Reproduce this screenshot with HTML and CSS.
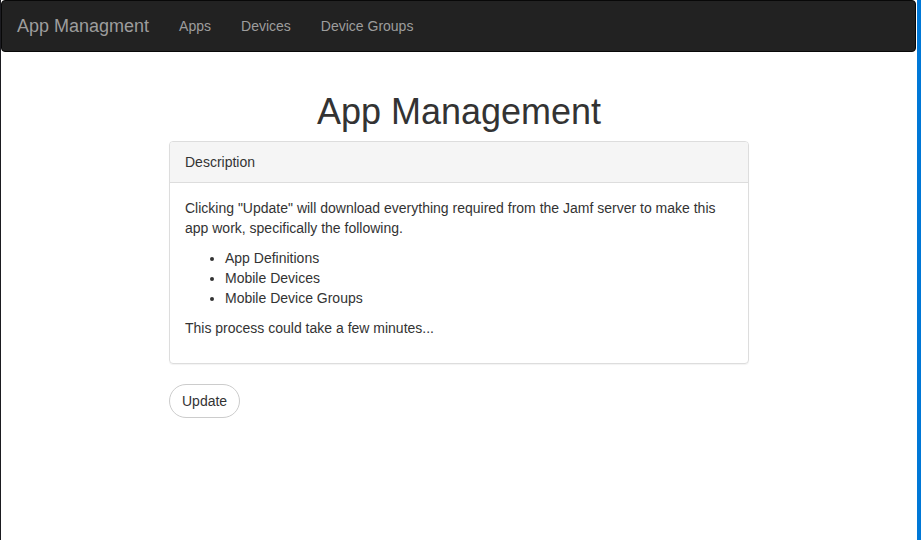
FILE: index.html
```html
<!DOCTYPE html>
<html>
<head>
<meta charset="utf-8">
<link rel="stylesheet" href="styles.css">
</head>
<body>
<nav class="navbar">
  <a class="brand" href="#">App Managment</a>
  <ul class="nav">
    <li><a href="#">Apps</a></li>
    <li><a href="#">Devices</a></li>
    <li><a href="#">Device Groups</a></li>
  </ul>
</nav>
<main class="container">
  <h1 class="title">App Management</h1>
  <section class="panel">
    <div class="panel-heading">Description</div>
    <div class="panel-body">
      <p>Clicking "Update" will download everything required from the Jamf server to make this<br>app work, specifically the following.</p>
      <ul class="list">
        <li>App Definitions</li>
        <li>Mobile Devices</li>
        <li>Mobile Device Groups</li>
      </ul>
      <p>This process could take a few minutes...</p>
    </div>
  </section>
  <button class="btn" type="button">Update</button>
</main>
</body>
</html>
```

FILE: styles.css
```css
html, body {
  height: 100%;
}
body {
  margin: 0;
  box-sizing: border-box;
  border-left: 1px solid #1b1b20;
  border-right: 4px solid #0078d7;
  font-family: "Liberation Sans", Arial, sans-serif;
  font-size: 14px;
  line-height: 20px;
  color: #333;
  background: #fff;
}
.navbar {
  display: flex;
  align-items: center;
  height: 50px;
  margin: 0 1px 20px 0;
  padding: 0 15px 0 0;
  background: #222;
  border: 1px solid #080808;
  border-radius: 4px;
}
.brand {
  padding: 15px;
  font-size: 18px;
  line-height: 20px;
  color: #9d9d9d;
  text-decoration: none;
}
.nav {
  display: flex;
  list-style: none;
  margin: 0;
  padding: 0;
}
.nav a {
  display: block;
  padding: 15px;
  color: #9d9d9d;
  text-decoration: none;
}
.container {
  display: flow-root;
  width: 580px;
  margin: 0 auto;
}
.title {
  margin: 20px 0 10px;
  font-size: 36px;
  font-weight: 500;
  line-height: 39px;
  text-align: center;
}
.panel {
  margin-bottom: 20px;
  border: 1px solid #ddd;
  border-radius: 4px;
  box-shadow: 0 1px 1px rgba(0,0,0,0.05);
}
.panel-heading {
  padding: 10px 15px;
  background: #f5f5f5;
  border-bottom: 1px solid #ddd;
  border-radius: 3px 3px 0 0;
}
.panel-body {
  padding: 15px;
}
.panel-body p {
  margin: 0 0 10px;
}
.list {
  margin: 0 0 10px;
  padding-left: 40px;
}
.btn {
  font-family: inherit;
  font-size: 14px;
  line-height: 20px;
  padding: 6px 12px;
  color: #333;
  background: #fff;
  border: 1px solid #ccc;
  border-radius: 17px;
  cursor: pointer;
}
```
